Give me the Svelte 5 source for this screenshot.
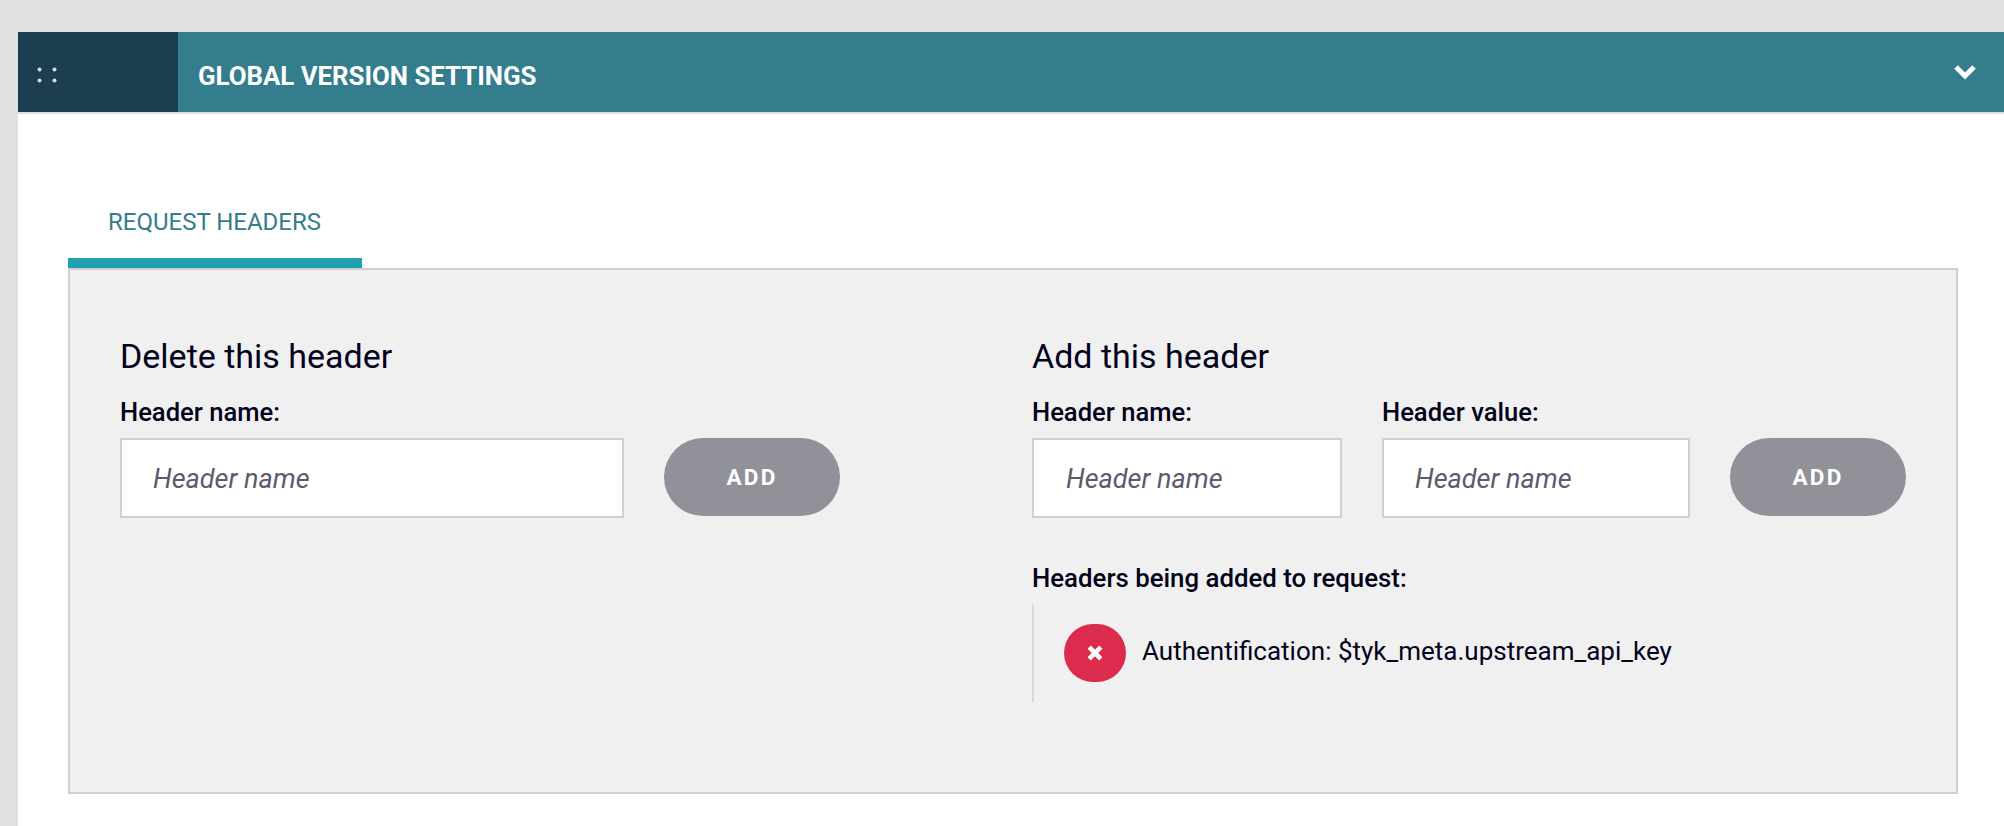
<script>
  let deleteName = $state('')
  let addName = $state('')
  let addValue = $state('')
  let open = $state(true)

  let added = $state([{ name: 'Authentification', value: '$tyk_meta.upstream_api_key' }])

  const removeHeader = (name) => () => {
    added = added.filter((el) => el.name !== name)
  }
</script>

<div class="page">
  <div class="card">
    <div class="topbar">
      <div class="handle">
        <svg width="20" height="16" viewBox="0 0 20 16" aria-hidden="true">
          <circle cx="2.5" cy="2.5" r="2" />
          <circle cx="17.5" cy="2.5" r="2" />
          <circle cx="2.5" cy="13.5" r="2" />
          <circle cx="17.5" cy="13.5" r="2" />
        </svg>
      </div>
      <h2>GLOBAL VERSION SETTINGS</h2>
      <button class="toggle" aria-label="Toggle" onclick={() => (open = !open)}>
        <svg width="24" height="16" viewBox="0 0 24 16" aria-hidden="true">
          <path d="M3 3l9 9 9-9" fill="none" stroke="#fff" stroke-width="5" />
        </svg>
      </button>
    </div>

    <div class="body">
      <div class="tabs">
        <div class="tab">REQUEST HEADERS</div>
      </div>
      <div class="panel">
        <section class="col-delete">
          <h3>Delete this header</h3>
          <div class="row">
            <label class="field wide">
              <span>Header name:</span>
              <input placeholder="Header name" bind:value={deleteName} />
            </label>
            <button class="add">ADD</button>
          </div>
        </section>

        <section class="col-add">
          <h3>Add this header</h3>
          <div class="row">
            <label class="field first">
              <span>Header name:</span>
              <input placeholder="Header name" bind:value={addName} />
            </label>
            <label class="field second">
              <span>Header value:</span>
              <input placeholder="Header name" bind:value={addValue} />
            </label>
            <button class="add">ADD</button>
          </div>
          <p class="list-title">Headers being added to request:</p>
          <ul>
            {#each added as item}
              <li>
                <button class="remove" aria-label="Remove" onclick={removeHeader(item.name)}>
                  <svg width="16" height="16" viewBox="0 0 16 16" aria-hidden="true">
                    <path d="M2.2 2.2l11.6 11.6M13.8 2.2l-11.6 11.6" stroke="#fff" stroke-width="4.6" />
                  </svg>
                </button>
                <span>{item.name}: {item.value}</span>
              </li>
            {/each}
          </ul>
        </section>
      </div>
    </div>
  </div>
</div>

<style>
  :global(body) {
    background: #e0e0e0;
    font-family: Roboto, "Liberation Sans", sans-serif;
    color: #03031c;
  }

  .page {
    height: 826px;
    overflow: hidden;
    padding: 32px 0 0 18px;
    box-sizing: border-box;
  }

  .card {
    background: #fff;
    height: 794px;
  }

  .topbar {
    display: flex;
    align-items: center;
    height: 80px;
    background: #337d8d;
    border-bottom: 2px solid #e0e0e0;
  }

  .handle {
    width: 160px;
    height: 80px;
    padding: 35px 0 0 19px;
    box-sizing: border-box;
    background: #1d3d50;
    flex: none;
  }

  .handle svg {
    display: block;
    fill: #d8dde0;
  }

  h2 {
    margin: 0 0 0 20px;
    padding-top: 7px;
    flex: 1;
    font-size: 25.8px;
    font-weight: 700;
    color: #fff;
  }

  .toggle {
    border: 0;
    padding: 0;
    margin: 0 27px 0 0;
    background: none;
    display: flex;
  }

  .body {
    padding: 90px 46px 0 50px;
  }

  .tabs {
    display: flex;
  }

  .tab {
    width: 294px;
    height: 64px;
    box-sizing: border-box;
    padding: 3px 0 0 40px;
    border-bottom: 10px solid #21a0b0;
    font-size: 24px;
    line-height: 30px;
    color: #337d8d;
  }

  .panel {
    display: flex;
    height: 526px;
    box-sizing: border-box;
    background: #f0f0f0;
    border: 2px solid #d0d0d0;
    padding: 66px 0 0 50px;
  }

  .col-delete {
    width: 912px;
    flex: none;
  }

  h3 {
    margin: 0 0 20px;
    font-size: 34px;
    line-height: 40px;
    font-weight: 400;
  }

  .row {
    display: flex;
    align-items: flex-end;
  }

  .field {
    display: flex;
    flex-direction: column;
    gap: 10px;
    width: 310px;
    font-size: 25.6px;
    line-height: 32px;
    font-weight: 500;
  }

  .field.second {
    margin-left: 40px;
    width: 308px;
  }

  .field.wide {
    width: 504px;
  }

  input {
    width: 100%;
    height: 80px;
    box-sizing: border-box;
    border: 2px solid #d0d0d0;
    background: #fff;
    padding: 2px 0 0 31px;
    margin: 0;
    font-family: inherit;
    font-size: 27px;
    font-style: italic;
    border-radius: 0;
    outline: none;
  }

  .field.first input {
    padding-left: 32px;
  }

  input::placeholder {
    color: #5b5b6d;
    opacity: 1;
  }

  .add {
    width: 176px;
    height: 78px;
    margin: 0 0 2px 40px;
    padding: 0;
    border: 0;
    border-radius: 39px;
    background: #91919a;
    color: #fff;
    font-family: inherit;
    font-size: 22.5px;
    font-weight: 700;
    letter-spacing: 2.2px;
  }

  .list-title {
    margin: 44px 0 0;
    font-size: 25.8px;
    line-height: 32px;
    font-weight: 500;
  }

  ul {
    list-style: none;
    margin: 10px 0 0;
    padding: 20px 0 20px 30px;
    height: 98px;
    box-sizing: border-box;
    border-left: 2px solid #d9d9d9;
  }

  li {
    display: flex;
    align-items: center;
    gap: 16px;
    font-size: 26px;
    white-space: pre;
  }

  li span {
    padding-bottom: 5px;
  }

  .remove {
    width: 62px;
    height: 58px;
    padding: 0;
    border: 0;
    border-radius: 29px;
    background: #dc2c4e;
    display: flex;
    align-items: center;
    justify-content: center;
  }
</style>
